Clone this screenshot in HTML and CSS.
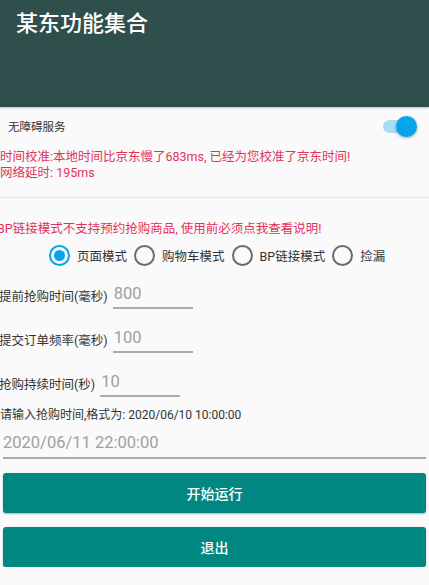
FILE: index.html
```html
<!DOCTYPE html>
<html lang="zh">
<head>
<meta charset="utf-8">
<link rel="stylesheet" href="styles.css">
</head>
<body>
<header class="appbar"><h1 class="title">某东功能集合</h1></header>
<main class="content">
  <div class="switch-row">
    <span class="switch-label">无障碍服务</span>
    <span class="switch"><span class="track"></span><span class="thumb"></span></span>
  </div>
  <div class="status">
    <div>时间校准:本地时间比京东慢了683ms, 已经为您校准了京东时间!</div>
    <div>网络延时: 195ms</div>
  </div>
  <div class="divider"></div>
  <div class="warning">BP链接模式不支持预约抢购商品, 使用前必须点我查看说明!</div>
  <div class="radios">
    <span class="radio checked"></span><span class="radio-text">页面模式</span>
    <span class="radio"></span><span class="radio-text">购物车模式</span>
    <span class="radio"></span><span class="radio-text">BP链接模式</span>
    <span class="radio"></span><span class="radio-text">捡漏</span>
  </div>
  <div class="field-row">
    <span class="field-label">提前抢购时间(毫秒)</span>
    <span class="field-input">800</span>
  </div>
  <div class="field-row">
    <span class="field-label">提交订单频率(毫秒)</span>
    <span class="field-input">100</span>
  </div>
  <div class="field-row">
    <span class="field-label">抢购持续时间(秒)</span>
    <span class="field-input">10</span>
  </div>
  <div class="hint">请输入抢购时间,格式为: 2020/06/10 10:00:00</div>
  <div class="date-input">2020/06/11 22:00:00</div>
  <div class="buttons">
    <button class="btn">开始运行</button>
    <button class="btn">退出</button>
  </div>
</main>
</body>
</html>
```
FILE: styles.css
```css
* { box-sizing: border-box; }
html, body {
  margin: 0;
  padding: 0;
  background: #fafafa;
  font-family: Roboto, "Noto Sans CJK SC", sans-serif;
  color: #333;
}
.appbar {
  height: 107px;
  background: #2f4f4d;
  padding: 10px 16px 0;
  box-shadow: 0 1px 2px rgba(0,0,0,0.25);
  position: relative;
}
.title {
  margin: 0;
  font-size: 22px;
  line-height: 28px;
  font-weight: 500;
  color: #fff;
}
.content {
  display: flex;
  flex-direction: column;
}
.switch-row {
  height: 36px;
  margin-top: 1px;
  display: flex;
  align-items: center;
  justify-content: space-between;
  padding: 0 12px 0 8px;
}
.switch-label {
  font-size: 11.5px;
  color: #333;
}
.switch {
  position: relative;
  width: 34px;
  height: 21px;
  display: block;
}
.track {
  position: absolute;
  left: 0;
  top: 4px;
  width: 32px;
  height: 13px;
  border-radius: 7px;
  background: #a9dcf7;
}
.thumb {
  position: absolute;
  right: 0;
  top: 0;
  width: 21px;
  height: 21px;
  border-radius: 50%;
  background: #07a4ec;
  box-shadow: 0 1px 3px rgba(0,0,0,0.35);
}
.status {
  margin-top: 5px;
  color: #e2325c;
  font-size: 12.5px;
  line-height: 16px;
}
.divider {
  margin-top: 16px;
  height: 1px;
  background: #e6e6e6;
}
.warning {
  margin-top: 23px;
  margin-left: -3px;
  color: #e2325c;
  font-size: 12.5px;
  line-height: 16px;
  white-space: nowrap;
}
.radios {
  margin-top: 6px;
  height: 24px;
  display: flex;
  align-items: center;
  padding-left: 49px;
}
.radio {
  width: 21px;
  height: 21px;
  border-radius: 50%;
  border: 2px solid #6b6b6b;
  display: flex;
  align-items: center;
  justify-content: center;
  flex: none;
}
.radio.checked {
  border-color: #07a4ec;
}
.radio.checked::after {
  content: "";
  width: 11px;
  height: 11px;
  border-radius: 50%;
  background: #07a4ec;
}
.radio-text {
  font-size: 12.5px;
  color: #333;
  margin: 0 7px 0 7px;
}
.field-row {
  height: 44px;
  display: flex;
  align-items: center;
}
.radios + .field-row { margin-top: 6px; }
.field-label {
  font-size: 12.5px;
  color: #333;
  margin-left: -1px;
  margin-right: 5px;
}
.field-input {
  width: 80px;
  height: 27px;
  margin-top: 1px;
  border-bottom: 2px solid #acacac;
  font-size: 16.5px;
  line-height: 24px;
  color: #a0a0a0;
  padding-left: 1px;
}
.hint {
  margin-top: 2px;
  font-size: 12px;
  line-height: 16px;
  color: #333;
}
.date-input {
  margin: 7px 3px 0;
  height: 29px;
  border-bottom: 2px solid #acacac;
  font-size: 16.5px;
  line-height: 26px;
  color: #a0a0a0;
}
.buttons {
  display: flex;
  flex-direction: column;
  gap: 14px;
  margin: 14px 3px 0;
}
.btn {
  height: 40px;
  border: none;
  border-radius: 3px;
  background: #018781;
  color: #fff;
  font-family: Roboto, "Noto Sans CJK SC", sans-serif;
  font-size: 14px;
  font-weight: 500;
  box-shadow: 0 1px 2px rgba(0,0,0,0.3);
}
```
